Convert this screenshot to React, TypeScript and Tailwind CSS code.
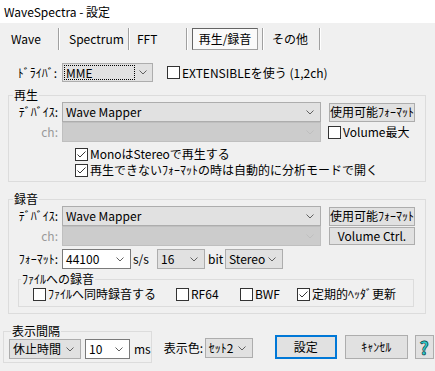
import React from "react";

const Chevron = ({ disabled = false }: { disabled?: boolean }) => (
  <svg width="8" height="5" viewBox="0 0 8 5" className="shrink-0">
    <path
      d="M0.5 0.5 L4 4 L7.5 0.5"
      fill="none"
      stroke={disabled ? "#bfbfbf" : "#606060"}
      strokeWidth="1"
    />
  </svg>
);

type ComboProps = {
  w: string;
  kind?: "gray" | "white" | "disabled";
  h?: string;
  children?: React.ReactNode;
};

const Combo = ({ w, kind = "gray", h = "h-[20px]", children }: ComboProps) => {
  const tone =
    kind === "white"
      ? "bg-white border-[#7a7a7a]"
      : kind === "disabled"
      ? "bg-[#cccccc] border-[#bfbfbf]"
      : "bg-[#e1e1e1] border-[#adadad]";
  return (
    <div className={`${w} ${h} ${tone} border flex items-center justify-between pl-[3px] pr-[6px] shrink-0`}>
      <span className="whitespace-nowrap">{children}</span>
      <Chevron disabled={kind === "disabled"} />
    </div>
  );
};

const Btn = ({ w, h = "h-[19px]", children }: { w: string; h?: string; children: React.ReactNode }) => (
  <div className={`${w} ${h} bg-[#e1e1e1] border border-[#adadad] flex items-center justify-center shrink-0 whitespace-nowrap`}>
    {children}
  </div>
);

const Check = ({ checked = false }: { checked?: boolean }) => (
  <div className="w-[13px] h-[13px] border border-[#333333] bg-white flex items-center justify-center shrink-0">
    {checked && (
      <svg width="11" height="11" viewBox="0 0 11 11">
        <polyline points="1.5,5.5 4,8 9.5,2.5" fill="none" stroke="#333333" strokeWidth="1" />
      </svg>
    )}
  </div>
);

const Sep = () => <div className="w-[2px] h-[22px] border-l border-[#a0a0a0] border-r border-r-white shrink-0" />;

const Label = ({ children, gray = false }: { children: React.ReactNode; gray?: boolean }) => (
  <span className={`w-[53px] text-right pr-[4px] shrink-0 whitespace-nowrap ${gray ? "text-[#9a9a9a]" : ""}`}>{children}</span>
);

export default function App() {
  return (
    <div className="w-[435px] h-[371px] overflow-hidden bg-[#f0f0f0] text-black text-[12px] leading-[14px] [font-family:'Noto_Sans_CJK_JP',sans-serif]">
      <div className="h-[23px] bg-white flex items-center pl-[4px]">WaveSpectra - 設定</div>

      {/* tabs */}
      <div className="mt-[5px] h-[22px] flex items-center">
        <span className="w-[58px] pl-[11px]">Wave</span>
        <Sep />
        <span className="w-[68px] pl-[9px]">Spectrum</span>
        <Sep />
        <span className="w-[56px] pl-[7px]">FFT</span>
        <Sep />
        <div className="ml-[4px] w-[66px] h-[22px] flex items-center justify-center bg-[#fafafa] border border-t-[#646464] border-l-[#646464] border-r-[#a0a0a0] border-b-[#a0a0a0]">
          再生/録音
        </div>
        <div className="w-[4px]" />
        <Sep />
        <span className="w-[55px] pl-[8px]">その他</span>
        <Sep />
      </div>

      {/* driver */}
      <div className="mt-[13px] h-[19px] flex items-center">
        <span className="w-[62px] text-right pr-[5px] shrink-0">ﾄﾞﾗｲﾊﾞ:</span>
        <div className="w-[91px] h-[19px] bg-[#e1e1e1] border border-[#adadad] flex items-center justify-between pl-[1px] pr-[5px]">
          <span className="w-[71px] h-[15px] border border-dotted border-black flex items-center pl-px">MME</span>
          <Chevron />
        </div>
        <div className="ml-[14px]">
          <Check />
        </div>
        <span className="ml-[2px]">EXTENSIBLEを使う (1,2ch)</span>
      </div>

      {/* playback */}
      <fieldset className="ml-[8px] mt-[6px] w-[418px] border border-[#dcdcdc] pb-[3px]">
        <legend className="ml-[4px] px-[1px] leading-[14px]">再生</legend>
        <div className="h-[20px] flex items-center">
          <Label>ﾃﾞﾊﾞｲｽ:</Label>
          <Combo w="w-[259px]">Wave Mapper</Combo>
          <div className="ml-[8px]">
            <Btn w="w-[86px]">使用可能ﾌｫｰﾏｯﾄ</Btn>
          </div>
        </div>
        <div className="h-[20px] flex items-center">
          <Label gray>ch:</Label>
          <Combo w="w-[259px]" kind="disabled" />
          <div className="ml-[7px]">
            <Check />
          </div>
          <span className="ml-[2px]">Volume最大</span>
        </div>
        <div className="mt-[4px] pl-[66px]">
          <div className="h-[16px] flex items-center">
            <Check checked />
            <span className="ml-[2px]">MonoはStereoで再生する</span>
          </div>
          <div className="h-[16px] flex items-center">
            <Check checked />
            <span className="ml-[2px]">再生できないﾌｫｰﾏｯﾄの時は自動的に分析モードで開く</span>
          </div>
        </div>
      </fieldset>

      {/* recording */}
      <fieldset className="ml-[8px] mt-[10px] w-[418px] border border-[#dcdcdc] pb-[6px]">
        <legend className="ml-[4px] px-[1px] leading-[14px]">録音</legend>
        <div className="h-[20px] flex items-center">
          <Label>ﾃﾞﾊﾞｲｽ:</Label>
          <Combo w="w-[259px]">Wave Mapper</Combo>
          <div className="ml-[8px]">
            <Btn w="w-[86px]">使用可能ﾌｫｰﾏｯﾄ</Btn>
          </div>
        </div>
        <div className="h-[20px] flex items-center">
          <Label gray>ch:</Label>
          <Combo w="w-[259px]" kind="disabled" />
          <div className="ml-[8px]">
            <Btn w="w-[86px]" h="h-[18px]">Volume Ctrl.</Btn>
          </div>
        </div>
        <div className="mt-[3px] h-[20px] flex items-center">
          <Label>ﾌｫｰﾏｯﾄ:</Label>
          <Combo w="w-[69px]" kind="white">44100</Combo>
          <span className="w-[26px] pl-[2px] shrink-0">s/s</span>
          <Combo w="w-[48px]">16</Combo>
          <span className="w-[20px] pl-[3px] shrink-0">bit</span>
          <Combo w="w-[58px]">Stereo</Combo>
        </div>
        <fieldset className="ml-[9px] mt-[3px] w-[396px] border border-[#dcdcdc] pb-[4px]">
          <legend className="ml-[2px] px-[1px] leading-[14px]">ﾌｧｲﾙへの録音</legend>
          <div className="h-[16px] flex items-center pl-[14px]">
            <div className="w-[143px] flex items-center">
              <Check />
              <span className="ml-[2px]">ﾌｧｲﾙへ同時録音する</span>
            </div>
            <div className="w-[64px] flex items-center">
              <Check />
              <span className="ml-[2px]">RF64</span>
            </div>
            <div className="w-[57px] flex items-center">
              <Check />
              <span className="ml-[2px]">BWF</span>
            </div>
            <div className="flex items-center">
              <Check checked />
              <span className="ml-[2px]">定期的ﾍｯﾀﾞ更新</span>
            </div>
          </div>
        </fieldset>
      </fieldset>

      {/* bottom */}
      <div className="mt-[10px] flex items-start">
        <fieldset className="ml-[3px] w-[146px] border border-[#dcdcdc] pb-[3px] shrink-0">
          <legend className="ml-[7px] px-[1px] leading-[14px]">表示間隔</legend>
          <div className="mt-[1px] h-[20px] flex items-center pl-[5px]">
            <Combo w="w-[72px]">休止時間</Combo>
            <div className="ml-[4px]">
              <Combo w="w-[45px]" kind="white">10</Combo>
            </div>
            <span className="ml-[4px]">ms</span>
          </div>
        </fieldset>
        <div className="mt-[14px] h-[20px] flex items-center ml-[12px]">
          <span className="w-[41px] shrink-0">表示色:</span>
          <Combo w="w-[48px]">ｾｯﾄ2</Combo>
        </div>
        <div className="mt-[11px] ml-[22px] w-[62px] h-[24px] bg-[#e1e1e1] border-2 border-[#0078d7] flex items-center justify-center shrink-0">
          設定
        </div>
        <div className="mt-[11px] ml-[8px]">
          <Btn w="w-[63px]" h="h-[24px]">ｷｬﾝｾﾙ</Btn>
        </div>
        <div className="mt-[11px] ml-[7px]">
          <Btn w="w-[19px]" h="h-[24px]">
            <span className="text-[18px] leading-[18px] font-bold text-[#2fd0d0] [-webkit-text-stroke:0.7px_#0a4040]">?</span>
          </Btn>
        </div>
      </div>
    </div>
  );
}
